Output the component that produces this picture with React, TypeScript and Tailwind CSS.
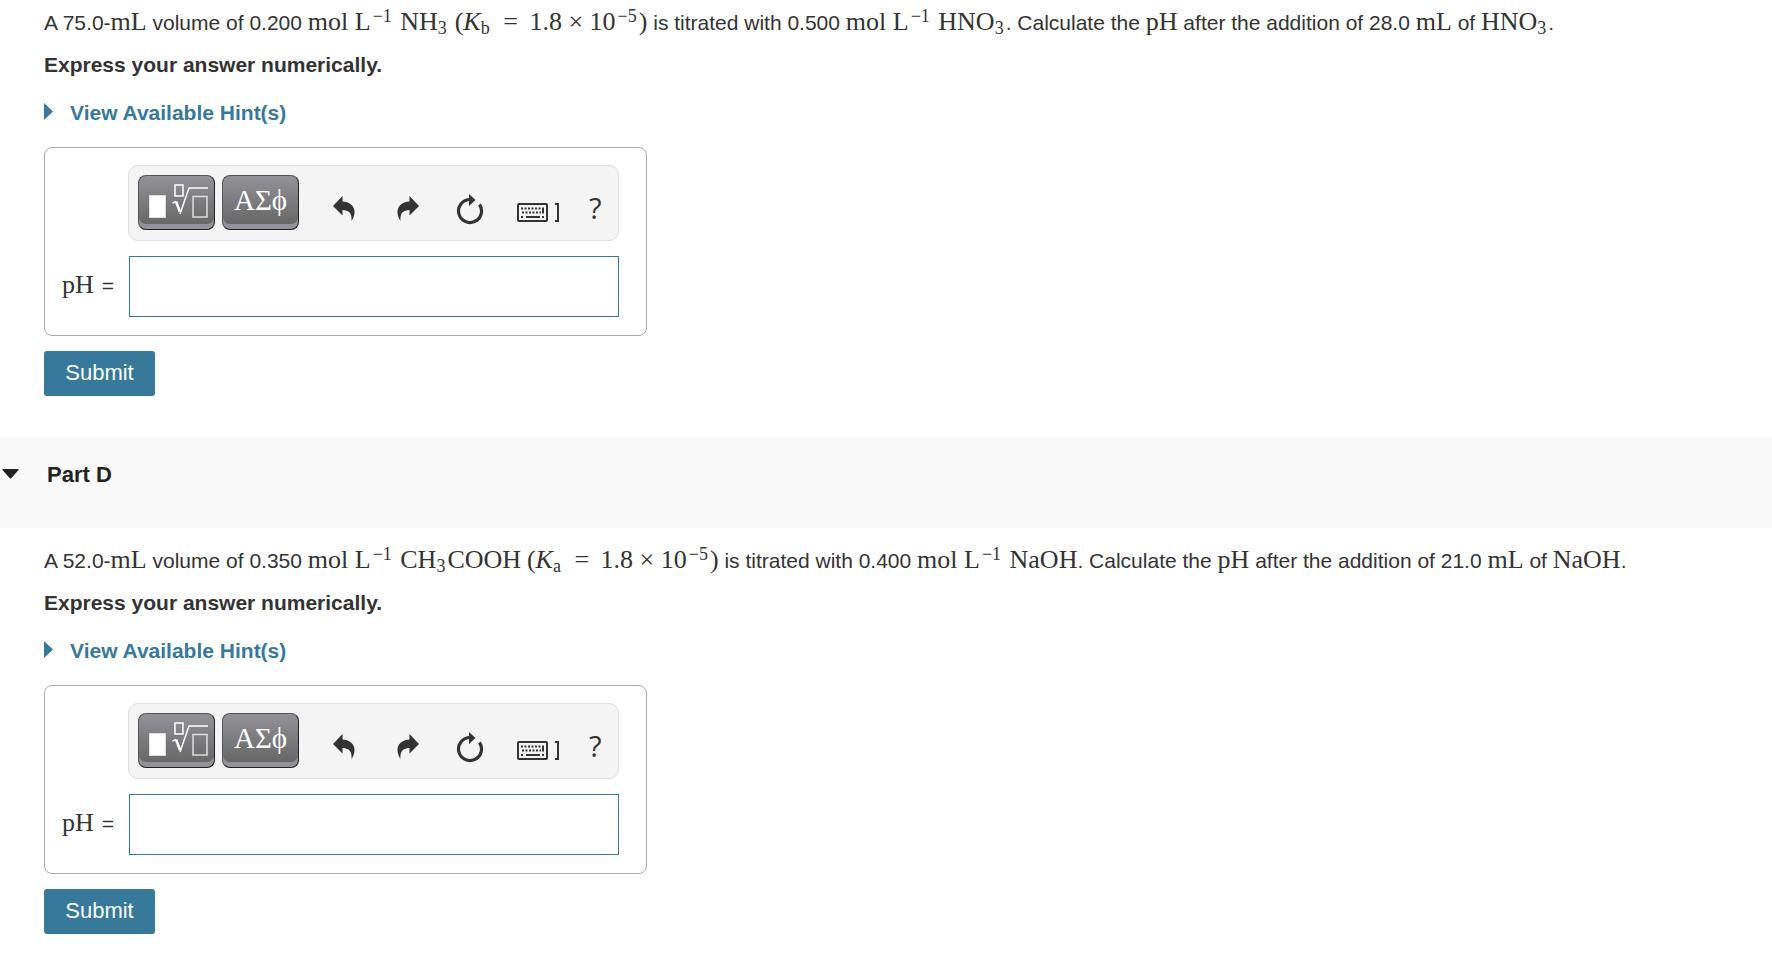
import React, { useId } from 'react';

const Formula: React.FC<{ children: React.ReactNode }> = ({ children }) => (
  <span className="font-['Liberation_Serif',serif] text-[26px] leading-6">{children}</span>
);

const Sup: React.FC<{ children: React.ReactNode }> = ({ children }) => (
  <sup className="text-lg leading-none align-baseline relative -top-2 mx-0.5">{children}</sup>
);

const Sub: React.FC<{ children: React.ReactNode }> = ({ children }) => (
  <sub className="text-lg leading-none align-baseline relative top-1 mr-0.5">{children}</sub>
);

const TemplateIcon = () => (
  <svg width="62" height="36" viewBox="0 0 62 36" fill="none" stroke="#fff" aria-hidden="true">
    <rect x="2.5" y="11.5" width="16" height="22" fill="#fff" stroke="#ddd" />
    <rect x="28" y="1" width="8" height="11" strokeWidth="1.5" />
    <path d="M25.5 19L29 17.5" strokeWidth="1.5" />
    <path d="M29 17.5L33 28" strokeWidth="2.5" />
    <path d="M33 30L42 4H61" strokeWidth="1.5" />
    <rect x="46" y="12.5" width="14" height="20.5" stroke="#ddd" strokeWidth="1.5" />
  </svg>
);

const UndoIcon = () => (
  <svg width="22" height="26" viewBox="0 0 22 26" fill="#333" aria-hidden="true">
    <path d="M0 10L9.5 0V5.5C17 6 21.5 10 21.5 16C21.5 19 20.5 22 18.5 25C19 18 17 14.5 9.5 14V19.5Z" />
  </svg>
);

const ResetIcon = () => (
  <svg width="28" height="31" viewBox="0 0 28 31" aria-hidden="true">
    <path d="M14 5.5A11.5 11.5 0 1 0 23.5 10.5" fill="none" stroke="#333" strokeWidth="3.2" />
    <path d="M13 0L19.5 6L13 12Z" fill="#333" />
  </svg>
);

const KeyboardIcon = () => (
  <svg width="43" height="20" viewBox="0 0 43 20" fill="none" stroke="#333" aria-hidden="true">
    <rect x="1" y="1" width="29" height="17" rx="1" strokeWidth="2" />
    <path d="M4 5.5H24M5 9.5H24" strokeWidth="2" strokeDasharray="2 1.5" />
    <path d="M26 4.5V10.5M4 14H6M9 14H23M25 14H27" strokeWidth="2" />
    <path d="M38 1H41V18H38" strokeWidth="2" />
  </svg>
);

const paletteButton =
  'flex h-[55px] w-[77px] rounded-lg border border-[#555] border-r-[#222] border-b-[#222] bg-linear-to-b from-[#929299] to-[#636363] text-white shadow-[inset_0_-5px_0_#92929a]';

const Toolbar = () => (
  <div className="flex h-[76px] items-start rounded-[10px] border border-[#ddd] bg-[#f4f4f4] pt-[9px] pl-[9px]">
    <button type="button" aria-label="Templates" className={paletteButton + ' pt-2 pl-2'}>
      <TemplateIcon />
    </button>
    <button
      type="button"
      className={paletteButton + " ml-[7px] justify-center pt-2 font-['Liberation_Serif',serif] text-[29px] leading-8"}
    >
      ΑΣϕ
    </button>
    <div className="flex items-start pt-[17px] text-[#333]">
      <button type="button" aria-label="Undo" className="ml-[34px] pt-1">
        <UndoIcon />
      </button>
      <button type="button" aria-label="Redo" className="ml-[42px] -scale-x-100 pt-1">
        <UndoIcon />
      </button>
      <button type="button" aria-label="Reset" className="ml-[37px] pt-0.5">
        <ResetIcon />
      </button>
      <button type="button" aria-label="Keyboard shortcuts" className="ml-[33px] pt-[11px]">
        <KeyboardIcon />
      </button>
      <button type="button" aria-label="Help" className="ml-[29px] font-['Open_Sans',sans-serif] text-[29px] leading-8">
        ?
      </button>
    </div>
  </div>
);

const AnswerForm = () => {
  const id = useId();

  return (
    <form className="mt-[19px]" onSubmit={(e) => e.preventDefault()}>
      <div className="w-full max-w-[603px] rounded-lg border border-[#aaa] pt-[17px] pr-[27px] pb-[18px] pl-[17px]">
        <div className="grid grid-cols-[67px_1fr] gap-y-[15px]">
          <div className="col-start-2 -ml-px">
            <Toolbar />
          </div>
          <label htmlFor={id} className="flex items-baseline gap-2 self-center pb-0.5 whitespace-nowrap">
            <Formula>pH</Formula> =
          </label>
          <input id={id} type="text" className="h-[61px] w-full border border-[#36799b] bg-white px-3 outline-none" />
        </div>
      </div>
      <button type="submit" className="mt-[15px] h-[45px] w-[111px] rounded-[3px] bg-[#36799b] pb-0.5 text-[22px] text-white">
        Submit
      </button>
    </form>
  );
};

const Question: React.FC<{ children: React.ReactNode }> = ({ children }) => (
  <section className="px-11">
    <p className="leading-[30px]">{children}</p>
    <p className="mt-3 leading-[30px] font-bold">Express your answer numerically.</p>
    <button type="button" className="mt-[18px] flex h-[30px] items-center font-bold text-[#36799b]">
      <svg className="mb-1" width="10" height="17" viewBox="0 0 10 17" fill="#36799b" aria-hidden="true">
        <path d="M0 0L9 8.5L0 17Z" />
      </svg>
      <span className="ml-4">View Available Hint(s)</span>
    </button>
    <AnswerForm />
  </section>
);

const App: React.FC = () => {
  return (
    <main className="min-h-screen bg-white pt-2 pb-6 font-['Liberation_Sans',Arial,sans-serif] text-[21px] text-[#333]">
      <Question>
        A 75.0-<Formula>mL</Formula> volume of 0.200 <Formula>mol L<Sup>−1</Sup> NH<Sub>3</Sub></Formula>{' '}
        <Formula>(<i>K</i><Sub>b</Sub> <span className="mx-[5px]">=</span> 1.8 × 10<Sup>−5</Sup>)</Formula> is titrated
        with 0.500 <Formula>mol L<Sup>−1</Sup> HNO<Sub>3</Sub></Formula>. Calculate the <Formula>pH</Formula> after
        the addition of 28.0 <Formula>mL</Formula> of <Formula>HNO<Sub>3</Sub></Formula>.
      </Question>

      <div className="mt-[41px] mb-[18px] flex h-[91px] bg-[#f9f9f9] pt-[22px] text-[#222]">
        <button type="button" className="flex h-[30px] items-center pl-0.5 text-[22px] font-bold">
          <svg width="17" height="10" viewBox="0 0 17 10" fill="#222" aria-hidden="true">
            <path d="M1 0H16Q17 0 16.5 1L9 9.5H8L.5 1Q0 0 1 0Z" />
          </svg>
          <span className="ml-7">Part D</span>
        </button>
      </div>

      <Question>
        A 52.0-<Formula>mL</Formula> volume of 0.350 <Formula>mol L<Sup>−1</Sup> CH<Sub>3</Sub>COOH</Formula>{' '}
        <Formula>(<i>K</i><Sub>a</Sub> <span className="mx-[5px]">=</span> 1.8 × 10<Sup>−5</Sup>)</Formula> is titrated
        with 0.400 <Formula>mol L<Sup>−1</Sup> NaOH</Formula>. Calculate the <Formula>pH</Formula> after the addition
        of 21.0 <Formula>mL</Formula> of <Formula>NaOH</Formula>.
      </Question>
    </main>
  );
};

export default App;
